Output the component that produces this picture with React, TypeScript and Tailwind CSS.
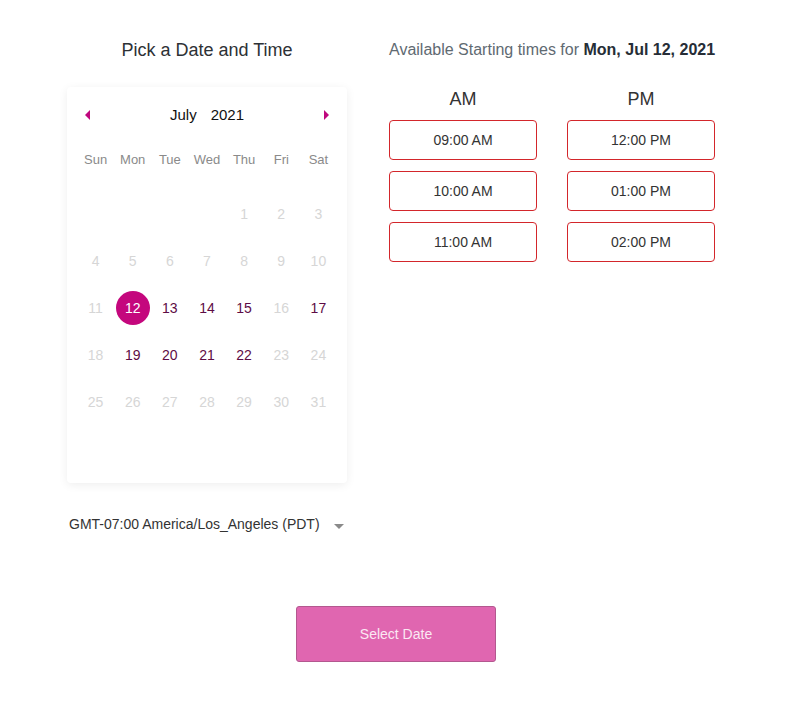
import { useState } from "react";

const dayNames = ["Sun", "Mon", "Tue", "Wed", "Thu", "Fri", "Sat"];
const enabled = [12, 13, 14, 15, 17, 19, 20, 21, 22];
const amSlots = ["09:00 AM", "10:00 AM", "11:00 AM"];
const pmSlots = ["12:00 PM", "01:00 PM", "02:00 PM"];

// July 2021 starts on a Thursday
const cells: (number | null)[] = [
  ...Array(4).fill(null),
  ...Array.from({ length: 31 }, (_, i) => i + 1),
];
while (cells.length < 42) cells.push(null);

export default function App() {
  const [selected, setSelected] = useState(12);

  return (
    <main className="min-h-screen bg-white font-['Liberation_Sans',Arial,sans-serif] text-[#333]">
      <div className="flex pt-[38px]">
        <section className="ml-[67px] w-[280px]">
          <h1 className="text-center text-[18px] leading-[24px] text-[#2d3135]">Pick a Date and Time</h1>

          <div className="mt-[25px] rounded-[4px] bg-white px-[10px] pt-[14px] pb-[11px] shadow-[0_2px_10px_rgba(0,0,0,0.07)]">
            <div className="flex h-[28px] items-center justify-between px-[8px]">
              <button className="flex h-[20px] w-[10px] items-center">
                <span className="block h-0 w-0 border-y-[5px] border-r-[5px] border-y-transparent border-r-[#c0077e]" />
              </button>
              <div className="flex gap-[14px] text-[15px] text-[#111]">
                <span>July</span>
                <span>2021</span>
              </div>
              <button className="flex h-[20px] w-[10px] items-center justify-end">
                <span className="block h-0 w-0 border-y-[5px] border-l-[5px] border-y-transparent border-l-[#c0077e]" />
              </button>
            </div>

            <div className="mt-[16px] grid h-[30px] grid-cols-7 items-center text-center text-[13px] text-[#8a8a8a]">
              {dayNames.map((d) => (
                <span key={d}>{d}</span>
              ))}
            </div>

            <div className="mt-[15px] grid grid-cols-7">
              {cells.map((d, i) => {
                const isOn = d !== null && enabled.includes(d);
                const isSel = d === selected;
                return (
                  <div key={i} className="flex h-[47px] items-center justify-center pt-[1px]">
                    {d !== null && (
                      <button
                        onClick={() => isOn && setSelected(d)}
                        className={
                          isSel
                            ? "flex h-[34px] w-[34px] items-center justify-center rounded-full bg-[#c4077d] text-[14px] text-white"
                            : isOn
                            ? "flex h-[34px] w-[34px] items-center justify-center text-[14px] text-[#5e0c45]"
                            : "flex h-[34px] w-[34px] items-center justify-center text-[14px] text-[#d6d6d6]"
                        }
                      >
                        {d}
                      </button>
                    )}
                  </div>
                );
              })}
            </div>
          </div>

          <div className="mt-[31px] flex items-center pl-[2px] text-[14px] leading-[20px] text-[#333]">
            <span>GMT-07:00 America/Los_Angeles (PDT)</span>
            <span className="ml-[14px] mt-[4px] block h-0 w-0 border-x-[5px] border-t-[5px] border-x-transparent border-t-[#8a8a8a]" />
          </div>
        </section>

        <section className="ml-[42px] w-[326px]">
          <p className="whitespace-nowrap text-[16px] leading-[24px] text-[#5f6a72]">
            Available Starting times for <b className="font-bold text-[#262d36]">Mon, Jul 12, 2021</b>
          </p>

          <div className="mt-[25px] grid grid-cols-2 gap-x-[30px]">
            <div>
              <h2 className="text-center text-[18px] leading-[24px] text-[#333]">AM</h2>
              <div className="mt-[9px] flex flex-col gap-[11px]">
                {amSlots.map((t) => (
                  <button key={t} className="h-[40px] w-[148px] rounded-[4px] border border-[#d3262b] text-[14px] text-[#333]">
                    {t}
                  </button>
                ))}
              </div>
            </div>
            <div>
              <h2 className="text-center text-[18px] leading-[24px] text-[#333]">PM</h2>
              <div className="mt-[9px] flex flex-col gap-[11px]">
                {pmSlots.map((t) => (
                  <button key={t} className="h-[40px] w-[148px] rounded-[4px] border border-[#d3262b] text-[14px] text-[#333]">
                    {t}
                  </button>
                ))}
              </div>
            </div>
          </div>
        </section>
      </div>

      <div className="mt-[72px] flex justify-center pl-[5px]">
        <button className="h-[56px] w-[200px] rounded-[3px] border border-[#b3588f] bg-[#e066b0] text-[14px] text-[#fbe8f3]">
          Select Date
        </button>
      </div>
    </main>
  );
}
